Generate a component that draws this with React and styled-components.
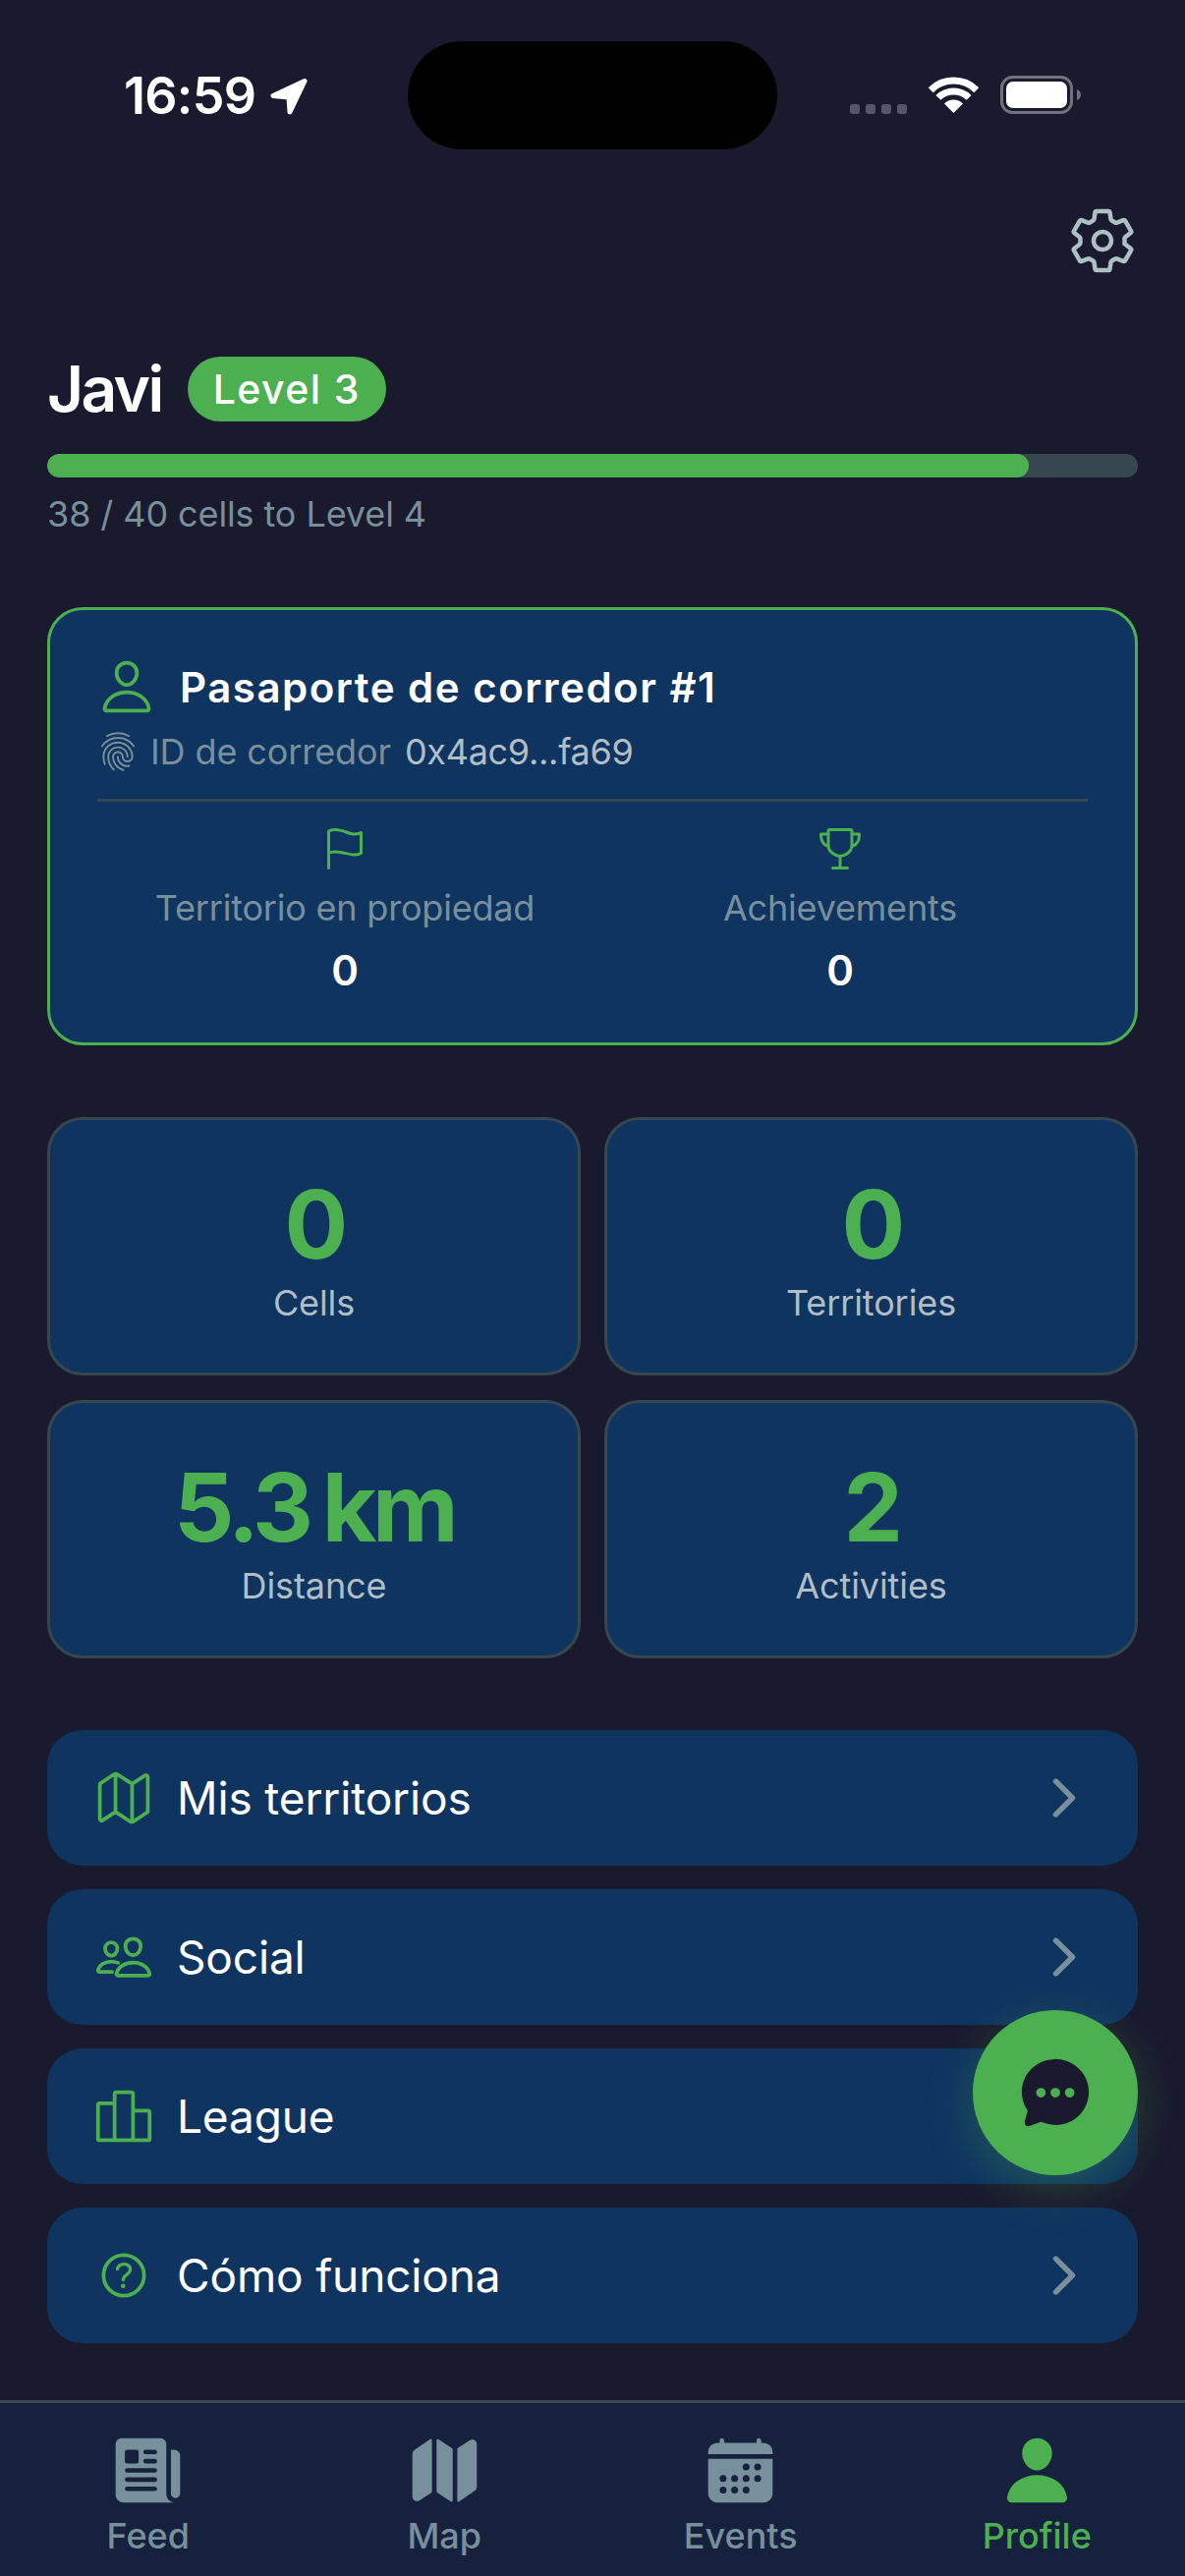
import React from "react";
import styled, { createGlobalStyle } from "styled-components";
import {
  IoSettingsOutline, IoPersonOutline, IoFingerPrintOutline, IoFlagOutline, IoTrophyOutline,
  IoMapOutline, IoPeopleOutline, IoPodiumOutline, IoHelpCircleOutline, IoChevronForward,
  IoChatbubbleEllipses, IoNewspaper, IoMap, IoCalendar, IoPerson,
} from "react-icons/io5";

const GREEN = "#4caf50";
const NAVY = "#0f3460";
const BG = "#1a1a2e";
const MUTED = "#78909c";
const LINE = "#37474f";

const Global = createGlobalStyle`
  html, body { margin: 0; padding: 0; background: ${BG}; }
  * { box-sizing: border-box; }
  body { font-family: Inter, "Liberation Sans", sans-serif; }
`;

const Page = styled.div`
  position: relative;
  width: 1206px;
  height: 2622px;
  overflow: hidden;
  background: ${BG};
  display: flex;
  flex-direction: column;
  color: #fff;
`;

const StatusBar = styled.div`
  height: 152px;
  flex: none;
  display: flex;
  align-items: flex-start;
  padding-top: 42px;
  padding-left: 126px;
`;
const TimeGroup = styled.div`
  width: 289px;
  height: 110px;
  display: flex;
  align-items: flex-start;
  gap: 13px;
  padding-top: 37px;
`;
const Time = styled.span`
  font-size: 52px;
  line-height: 38px;
  font-weight: 600;
  letter-spacing: -0.7px;
  width: 136px;
`;
const Island = styled.div`
  width: 376px;
  height: 110px;
  border-radius: 55px;
  background: #000;
  flex: none;
`;
const StatusRight = styled.div`
  margin-left: 74px;
  padding-top: 36px;
  display: flex;
  align-items: flex-start;
`;
const Dots = styled.div`
  display: flex;
  gap: 6px;
  margin-top: 28px;
  margin-right: 22px;
`;
const Dot = styled.i`
  width: 10px;
  height: 10px;
  border-radius: 3px;
  background: #55566a;
`;
const StatusSvg = styled.svg`
  display: block;
  flex: none;
`;

const Content = styled.main`
  flex: 1;
  padding: 0 48px;
  min-height: 0;
`;
const TopRow = styled.div`
  margin-top: 57px;
  height: 72px;
  display: flex;
  justify-content: flex-end;
  color: #b0bec5;
`;
const NameRow = styled.div`
  margin-top: 82px;
  height: 66px;
  display: flex;
  align-items: center;
  gap: 26px;
`;
const Name = styled.h1`
  margin: 0;
  font-size: 64px;
  line-height: 66px;
  font-weight: 600;
  letter-spacing: -2.6px;
`;
const LevelBadge = styled.span`
  height: 66px;
  padding: 0 26px;
  border-radius: 33px;
  background: ${GREEN};
  display: flex;
  align-items: center;
  font-size: 41px;
  font-weight: 500;
  letter-spacing: 1.4px;
`;
const Track = styled.div`
  margin-top: 33px;
  height: 24px;
  border-radius: 12px;
  background: ${LINE};
  overflow: hidden;
`;
const Fill = styled.div`
  height: 100%;
  border-radius: 12px;
  background: ${GREEN};
`;
const ProgressText = styled.p`
  margin: 15px 0 0;
  font-size: 36px;
  line-height: 44px;
  letter-spacing: -0.1px;
  color: ${MUTED};
`;

const Passport = styled.section`
  margin-top: 73px;
  height: 446px;
  padding: 48px;
  background: ${NAVY};
  border: 3px solid ${GREEN};
  border-radius: 36px;
`;
const PassHead = styled.div`
  display: flex;
  align-items: center;
  gap: 24px;
  height: 60px;
  color: ${GREEN};
`;
const PassTitle = styled.h2`
  margin: 0;
  font-size: 42px;
  font-weight: 600;
  letter-spacing: 1.5px;
  color: #fff;
`;
const IdRow = styled.div`
  margin-top: 15px;
  height: 42px;
  display: flex;
  align-items: center;
  gap: 12px;
  font-size: 36px;
  letter-spacing: -0.1px;
  color: ${MUTED};
`;
const IdValue = styled.span`
  margin-left: 2px;
  color: #b0bec5;
  letter-spacing: -0.3px;
`;
const Divider = styled.hr`
  margin: 27px 0 24px;
  border: 0;
  height: 3px;
  background: ${LINE};
`;
const PassStats = styled.div`
  display: flex;
`;
const PassStat = styled.div`
  flex: 1;
  display: flex;
  flex-direction: column;
  align-items: center;
  color: ${GREEN};
`;
const PassLabel = styled.span`
  margin-top: 14px;
  font-size: 36px;
  line-height: 44px;
  letter-spacing: -0.2px;
  color: ${MUTED};
`;
const PassValue = styled.span`
  margin-top: 16px;
  font-size: 42px;
  line-height: 51px;
  font-weight: 600;
  color: #fff;
`;

const StatGrid = styled.section`
  margin-top: 73px;
  display: grid;
  grid-template-columns: 1fr 1fr;
  column-gap: 24px;
  row-gap: 25px;
`;
const StatCard = styled.div`
  height: 263px;
  padding: 48px 0;
  background: ${NAVY};
  border: 3px solid ${LINE};
  border-radius: 36px;
  text-align: center;
`;
const StatValue = styled.div`
  font-size: 96px;
  line-height: 116px;
  font-weight: 700;
  letter-spacing: -4.5px;
  word-spacing: -5px;
  color: ${GREEN};
`;
const StatLabel = styled.div`
  font-size: 36px;
  line-height: 44px;
  letter-spacing: -0.1px;
  color: #b0bec5;
`;

const Menu = styled.nav`
  margin-top: 73px;
  display: flex;
  flex-direction: column;
  gap: 24px;
`;
const MenuRow = styled.div`
  height: 138px;
  padding: 0 45px 0 48px;
  border-radius: 36px;
  background: ${NAVY};
  display: flex;
  align-items: center;
  gap: 24px;
  color: ${GREEN};
`;
const MenuLabel = styled.span`
  flex: 1;
  font-size: 46px;
  letter-spacing: -0.15px;
  color: #fff;
`;
const Chevron = styled(IoChevronForward)`
  color: ${MUTED};
`;

const Fab = styled.button`
  position: absolute;
  left: 990px;
  top: 2046px;
  width: 168px;
  height: 168px;
  padding: 0;
  border: 0;
  border-radius: 50%;
  background: ${GREEN};
  color: ${BG};
  display: flex;
  align-items: center;
  justify-content: center;
  box-shadow: 0 12px 48px rgba(76, 175, 80, 0.3);
`;

const TabBar = styled.footer`
  flex: none;
  height: 179px;
  border-top: 3px solid ${LINE};
  background: #16213e;
  display: grid;
  grid-template-columns: repeat(4, 1fr);
`;
const Tab = styled.div`
  display: flex;
  flex-direction: column;
  align-items: center;
  padding-top: 31px;
  color: ${(p) => (p.$active ? GREEN : MUTED)};
`;
const TabLabel = styled.span`
  margin-top: 7px;
  font-size: 36px;
  line-height: 44px;
  font-weight: 500;
`;

const menu = [
  ["Mis territorios", IoMapOutline],
  ["Social", IoPeopleOutline],
  ["League", IoPodiumOutline],
  ["Cómo funciona", IoHelpCircleOutline],
];
const stats = [["0", "Cells"], ["0", "Territories"], ["5.3 km", "Distance"], ["2", "Activities"]];
const tabs = [["Feed", IoNewspaper], ["Map", IoMap], ["Events", IoCalendar], ["Profile", IoPerson, true]];

export default function App() {
  return (
    <Page>
      <Global />
      <StatusBar>
        <TimeGroup>
          <Time>16:59</Time>
          <StatusSvg width="38" height="38" viewBox="0 0 38 38">
            <path fill="#fff" stroke="#fff" strokeWidth="5" strokeLinejoin="round" d="M35 3.5 L3 18.5 L19 20 L20 35Z" />
          </StatusSvg>
        </TimeGroup>
        <Island />
        <StatusRight>
          <Dots><Dot /><Dot /><Dot /><Dot /></Dots>
          <StatusSvg width="51" height="38" viewBox="0 0 51 38" fill="none" stroke="#fff">
            <path d="M2.2 13.7A33 33 0 0 1 48.8 13.7" strokeWidth="7" />
            <path d="M9.9 21.4A22 22 0 0 1 41.1 21.4" strokeWidth="7" />
            <path d="M25.5 37L16 27.5A13.5 13.5 0 0 1 35 27.5Z" fill="#fff" stroke="none" />
          </StatusSvg>
          <StatusSvg width="82" height="40" viewBox="0 0 82 40" fill="none" style={{ marginLeft: 22, marginTop: -1 }}>
            <rect x="1.5" y="1.5" width="71" height="36" rx="11" stroke="#71717f" strokeWidth="3" />
            <rect x="6" y="6" width="62" height="27" rx="7" fill="#fff" />
            <path d="M78 14 Q82 16 82 19.5 Q82 23 78 25Z" fill="#71717f" />
          </StatusSvg>
        </StatusRight>
      </StatusBar>
      <Content>
        <TopRow><IoSettingsOutline size={72} /></TopRow>
        <NameRow>
          <Name>Javi</Name>
          <LevelBadge>Level 3</LevelBadge>
        </NameRow>
        <Track><Fill style={{ width: "90%" }} /></Track>
        <ProgressText>38 / 40 cells to Level 4</ProgressText>

        <Passport>
          <PassHead>
            <IoPersonOutline size={60} />
            <PassTitle>Pasaporte de corredor #1</PassTitle>
          </PassHead>
          <IdRow>
            <IoFingerPrintOutline size={42} />
            <span>ID de corredor</span>
            <IdValue>0x4ac9...fa69</IdValue>
          </IdRow>
          <Divider />
          <PassStats>
            <PassStat>
              <IoFlagOutline size={48} />
              <PassLabel>Territorio en propiedad</PassLabel>
              <PassValue>0</PassValue>
            </PassStat>
            <PassStat>
              <IoTrophyOutline size={48} />
              <PassLabel>Achievements</PassLabel>
              <PassValue>0</PassValue>
            </PassStat>
          </PassStats>
        </Passport>

        <StatGrid>
          {stats.map(([v, l]) => (
            <StatCard key={l}>
              <StatValue>{v}</StatValue>
              <StatLabel>{l}</StatLabel>
            </StatCard>
          ))}
        </StatGrid>

        <Menu>
          {menu.map(([label, Icon]) => (
            <MenuRow key={label}>
              <Icon size={60} />
              <MenuLabel>{label}</MenuLabel>
              <Chevron size={60} />
            </MenuRow>
          ))}
        </Menu>
      </Content>

      <Fab aria-label="Chat"><IoChatbubbleEllipses size={78} /></Fab>

      <TabBar>
        {tabs.map(([label, Icon, active]) => (
          <Tab key={label} $active={active}>
            <Icon size={75} />
            <TabLabel>{label}</TabLabel>
          </Tab>
        ))}
      </TabBar>
    </Page>
  );
}
